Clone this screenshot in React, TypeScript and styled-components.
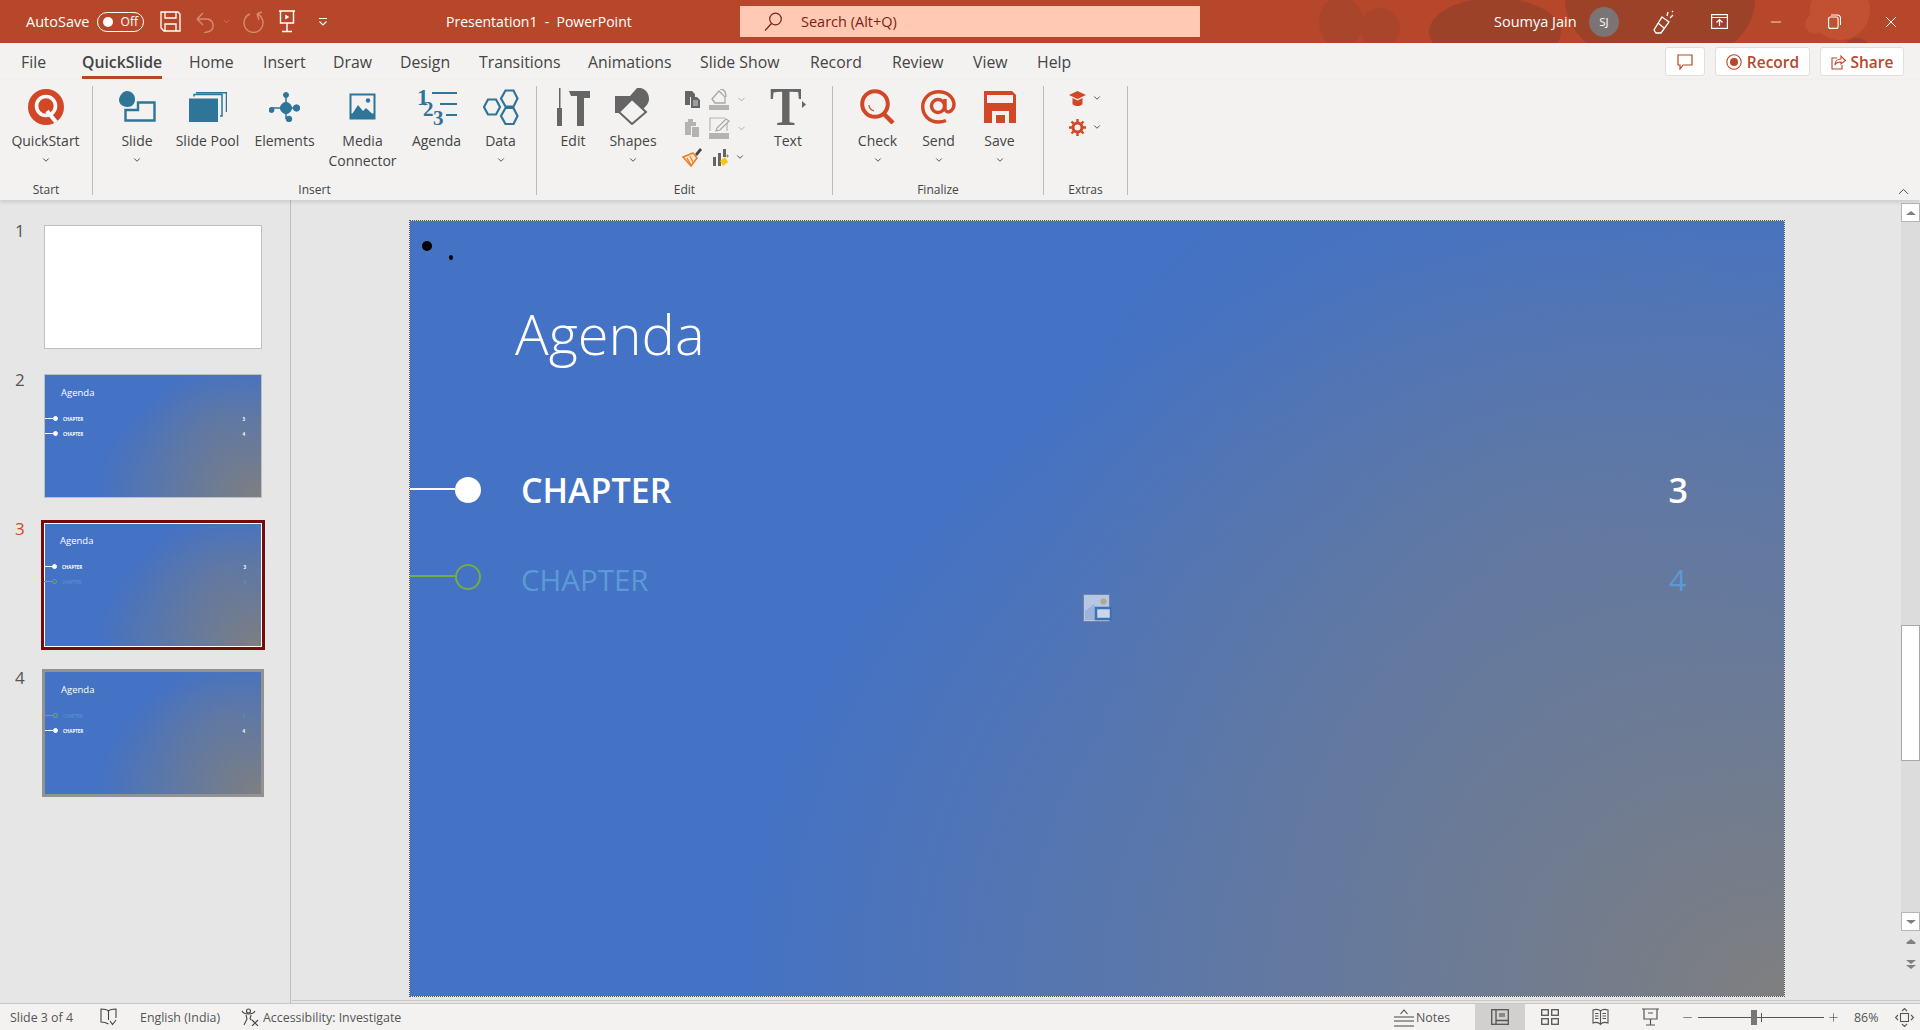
import React from 'react';
import styled, { createGlobalStyle } from 'styled-components';
import { ChevronDown, ChevronUp, X, Minus, Plus } from 'lucide-react';

const UI_FONT = `'Open Sans', 'Noto Sans', sans-serif`;
const TEAL = '#2e7598';
const RED = '#d24726';
const GREY = '#656565';
const FADED_BLUE = '#5b9bd5';

const GlobalStyle = createGlobalStyle`
  html, body {
    margin: 0;
    padding: 0;
    height: 100%;
    overflow: hidden;
    background: #e6e6e6;
  }
  #root {
    height: 100%;
  }
  * {
    box-sizing: border-box;
  }
`;

const tabs = [
  { label: 'File', width: 61 },
  { label: 'QuickSlide', width: 107, active: true },
  { label: 'Home', width: 74 },
  { label: 'Insert', width: 70 },
  { label: 'Draw', width: 67 },
  { label: 'Design', width: 79 },
  { label: 'Transitions', width: 109 },
  { label: 'Animations', width: 112 },
  { label: 'Slide Show', width: 110 },
  { label: 'Record', width: 82 },
  { label: 'Review', width: 81 },
  { label: 'View', width: 64 },
  { label: 'Help', width: 50 },
];

const Icon = {
  Save: () => (
    <svg width="21" height="21" viewBox="0 0 21 21" fill="none" stroke="#fff" strokeWidth="1.3">
      <path d="M1 1h17l2 2v17H4l-3-3z" />
      <path d="M5 1v6h11V1M5 20v-7h11v7" />
    </svg>
  ),
  Undo: () => (
    <svg width="19" height="22" viewBox="0 0 19 22" fill="none" stroke="#d98872" strokeWidth="1.4">
      <path d="M1 8h10a6.500 6.500 0 0 1 2 12.500L8 22M1 8l6-6M1 8l6 6" />
    </svg>
  ),
  Redo: () => (
    <svg width="21" height="22" viewBox="0 0 21 22" fill="none" stroke="#d98872" strokeWidth="1.4">
      <path d="M14 3a9.500 9.500 0 1 1-7 0M14 3l5-2M14 3l2 6" />
    </svg>
  ),
  Present: () => (
    <svg width="18" height="23" viewBox="0 0 18 23" fill="none" stroke="#fff" strokeWidth="1.4">
      <path d="M1 1h16M2.500 1v12h13V1M9 13v8M4 21.500h10" />
      <path d="M7.300 4.500v5l4-2.500z" fill="#fff" stroke="none" />
    </svg>
  ),
  Customize: () => (
    <svg width="10" height="10" viewBox="0 0 10 10" fill="none" stroke="#fff" strokeWidth="1.1">
      <path d="M1 1.500h8M1.500 4.500L5 8l3.500-3.500" />
    </svg>
  ),
  Search: () => (
    <svg width="18" height="20" viewBox="0 0 18 20" fill="none" stroke="#7d1f10" strokeWidth="1.2">
      <circle cx="11.500" cy="7" r="5.800" />
      <path d="M7.500 11.500L1 18.500" />
    </svg>
  ),
  Celebrate: () => (
    <svg width="22" height="24" viewBox="0 0 22 24" fill="none" stroke="#fff" strokeWidth="1.3">
      <path d="M9 7l7 5-8 11H3l-2-3z" />
      <path d="M5 13l6 5M14 6l1-4M17 8l3-3M19 1l1 1" />
    </svg>
  ),
  RibbonDisplay: () => (
    <svg width="17" height="15" viewBox="0 0 17 15" fill="none" stroke="#fff" strokeWidth="1.2">
      <rect x="0.600" y="0.600" width="15.800" height="13.800" />
      <path d="M1 3.500h15M8.500 12V6M5.500 8.500l3-3 3 3" />
    </svg>
  ),
  Restore: () => (
    <svg width="13" height="15" viewBox="0 0 13 15" fill="none" stroke="#fff" strokeWidth="1.1">
      <rect x="0.600" y="3" width="9.500" height="11.400" rx="2" />
      <path d="M3 1h6.500a3 3 0 0 1 3 3v7" />
    </svg>
  ),
  Comment: () => (
    <svg width="16" height="16" viewBox="0 0 16 16" fill="none" stroke="#b7472a" strokeWidth="1.2">
      <path d="M1 1h14v10H6l-3 4v-4H1z" />
    </svg>
  ),
  Record: () => (
    <svg width="16" height="16" viewBox="0 0 16 16" fill="none">
      <circle cx="8" cy="8" r="7.200" stroke="#b7472a" strokeWidth="1.1" />
      <circle cx="8" cy="8" r="4" fill="#b7472a" />
    </svg>
  ),
  Share: () => (
    <svg width="15" height="16" viewBox="0 0 15 16" fill="none" stroke="#b7472a" strokeWidth="1.1">
      <path d="M6 4H1v11h10v-4M4 11c0-4 3-6 6-6V2l4.500 4.500L10 10V8C7.500 8 5 9 4 11z" />
    </svg>
  ),
  QuickStart: () => (
    <svg width="36" height="36" viewBox="0 0 36 36">
      <circle cx="18" cy="18" r="18" fill={RED} />
      <circle cx="18" cy="17" r="9.500" fill="none" stroke="#fff" strokeWidth="3.600" />
      <path d="M19 22l9 11" stroke="#fff" strokeWidth="4" />
    </svg>
  ),
  Slide: () => (
    <svg width="37" height="31" viewBox="0 0 37 31">
      <path d="M8 0c4 0 8 3 8 8.500 0 4-3 7.500-7.500 7.500S0 13 0 9C0 5 4 0 8 0z" fill={TEAL} />
      <path d="M19 11.500h16.500v18h-29V19H19z" fill="none" stroke={TEAL} strokeWidth="2.400" />
    </svg>
  ),
  SlidePool: () => (
    <svg width="38" height="30" viewBox="0 0 38 30">
      <rect x="0" y="6.500" width="29" height="23.500" fill={TEAL} />
      <path d="M5 4.500V2.500h28V24h-2M7 0.800h30.500V20" fill="none" stroke={TEAL} strokeWidth="1.500" />
    </svg>
  ),
  Elements: () => (
    <svg width="31" height="30" viewBox="0 0 31 30" fill={TEAL} stroke={TEAL}>
      <path d="M17 3v24M2 16h27" strokeWidth="1.500" />
      <circle cx="17" cy="16" r="5.500" />
      <circle cx="17" cy="3" r="2.500" />
      <circle cx="2.500" cy="18" r="2.500" />
      <circle cx="27.500" cy="16" r="3.200" />
      <circle cx="20" cy="27" r="2.800" />
    </svg>
  ),
  Media: () => (
    <svg width="27" height="27" viewBox="0 0 27 27">
      <rect x="0.500" y="0.500" width="26" height="26" fill={TEAL} />
      <rect x="2.500" y="2.500" width="22" height="18" fill="#f3f2f1" />
      <circle cx="19" cy="7.500" r="2.200" fill={TEAL} />
      <path d="M2.500 22L9 12l5 6 3-3 7.500 7z" fill={TEAL} />
    </svg>
  ),
  Agenda: () => (
    <svg width="40" height="39" viewBox="0 0 40 39" fill={TEAL} overflow="visible">
      <text x="0" y="18" fontFamily="'Liberation Serif', serif" fontWeight="700" fontSize="23">1</text>
      <text x="6" y="29" fontFamily="'Liberation Serif', serif" fontWeight="700" fontSize="21">2</text>
      <text x="16" y="38" fontFamily="'Liberation Serif', serif" fontWeight="700" fontSize="21">3</text>
      <path d="M15 5h25v2H15zM23 16h17v2H23zM29 27h11v2H29z" />
    </svg>
  ),
  Data: () => (
    <svg width="36" height="36" viewBox="0 0 36 36" fill="none" stroke={TEAL} strokeWidth="2.200">
      <path d="M19 9.500l4.500-8h8l4 8-4 8h-8z" transform="translate(-1 0)" />
      <path d="M1 18l4-7.500h8l4 7.500-4 7.500H5z" />
      <path d="M18 27l4.500-8h8l4 8-4 8h-8z" />
    </svg>
  ),
  Edit: () => (
    <svg width="34" height="38" viewBox="0 0 34 38" fill={GREY}>
      <path d="M3 0h1.500v20H3zM1 20h5v18H1zM13 3h21v7h-6v28h-7V8h-6z" />
    </svg>
  ),
  Shapes: () => (
    <svg width="36" height="37" viewBox="0 0 36 37">
      <path d="M0 8h15L22 0c6-1 12 3 12 11 0 5-4 8-8 12L16 33 8 25H0z" fill={GREY} />
      <path d="M17 11l14 13-14 12L4 24z" fill="#f3f2f1" stroke={GREY} strokeWidth="2" />
    </svg>
  ),
  Copy: () => (
    <svg width="15" height="17" viewBox="0 0 15 17" fill={GREY}>
      <path d="M0 0h7l3 3v3H5v8H0z" />
      <path d="M6 6h6l3 3v8H6z" />
      <path d="M8 10h5M8 12h5M8 14h5" stroke="#f3f2f1" strokeWidth="0.800" />
    </svg>
  ),
  Paste: () => (
    <svg width="14" height="18" viewBox="0 0 14 18" fill="#b5b3b1">
      <path d="M0 3h3V0h5v3h3v4H6v9H0z" />
      <path d="M7 8h7v10H7z" />
    </svg>
  ),
  Fill: () => (
    <svg width="21" height="21" viewBox="0 0 21 21" fill="none">
      <path d="M3 10l7-8 6 6v6H6z" stroke="#a9a7a5" strokeWidth="1.300" />
      <path d="M0 16h20v5H0z" fill="#b5b3b1" />
      <path d="M11 0c4 0 6 3 6 8" stroke="#a9a7a5" strokeWidth="1.300" />
    </svg>
  ),
  Pen: () => (
    <svg width="21" height="22" viewBox="0 0 21 22" fill="none">
      <path d="M1 14V1h15M18 6v8" stroke="#b5b3b1" strokeWidth="1.200" />
      <path d="M7 14l1-3 9-9 3 2-9 9z" stroke="#a9a7a5" strokeWidth="1.200" />
      <path d="M0 16h20v6H0z" fill="#b5b3b1" />
    </svg>
  ),
  Brush: () => (
    <svg width="21" height="20" viewBox="0 0 21 20">
      <path d="M13 7l5-6 2 2-5 6z" fill="#444" />
      <path d="M1 10l10-4 4 5-6 8z" fill="#fbe3cc" stroke="#e8822a" strokeWidth="1.600" />
      <path d="M8 9l3 6M5 11l4 7" stroke="#e8822a" strokeWidth="1.300" />
    </svg>
  ),
  Chart: () => (
    <svg width="16" height="19" viewBox="0 0 16 19">
      <path d="M0 9h3v9H0zM5 5h3v13H5zM10 1h3v8h-3z" fill={GREY} />
      <path d="M7 13l5-4 3 5-5 4z" fill="#f2c811" />
      <path d="M13 8h3M14.500 6.500v3" stroke={GREY} strokeWidth="0.700" />
    </svg>
  ),
  Text: () => (
    <svg width="36" height="38" viewBox="0 0 36 38" fill={GREY} overflow="visible">
      <text transform="translate(0 37) scale(0.85 1)" fontFamily="'Liberation Serif', serif" fontWeight="700" fontSize="56">T</text>
      <path d="M32 13l4 3.500-4 3.500z" />
    </svg>
  ),
  Check: () => (
    <svg width="36" height="35" viewBox="0 0 36 35" fill="none" stroke={RED}>
      <circle cx="15" cy="15" r="12.800" strokeWidth="4" />
      <path d="M23 24l10 10" strokeWidth="4.500" />
      <path d="M9 16c0 3 2 5 5 6" strokeWidth="1.200" />
    </svg>
  ),
  Send: () => (
    <svg width="35" height="34" viewBox="0 0 35 34" fill="none" stroke={RED} strokeWidth="3.400">
      <circle cx="17" cy="16" r="6.500" />
      <path d="M24 9v9.500c0 3 3 4 5 3 3-2 4-4 4-6.500C33 7 26 1.700 17.500 1.700S1.700 8 1.700 16.500 8 32 17.500 32c3 0 5-.5 7.500-1.500" />
    </svg>
  ),
  SaveBig: () => (
    <svg width="32" height="32" viewBox="0 0 32 32" fill={RED}>
      <path fillRule="evenodd" d="M0 0h28l4 4v28h-7V20H8v12H0zM3 4v8h26V4z" />
      <path d="M12 24h9v8h-9z" />
    </svg>
  ),
  Mortar: () => (
    <svg width="17" height="15" viewBox="0 0 17 15" fill={RED}>
      <path d="M8.500 0L17 4 8.500 8 0 4z" />
      <path d="M3.500 7l5 2.500 5-2.500v6c-1 1.500-3 2-5 2s-4-.5-5-2z" />
    </svg>
  ),
  Gear: () => (
    <svg width="17" height="17" viewBox="0 0 17 17" fill="none" stroke={RED}>
      <circle cx="8.500" cy="8.500" r="4.500" strokeWidth="3" />
      <path d="M8.500 0v3M8.500 14v3M0 8.500h3M14 8.500h3M2.500 2.500l2 2M12.500 12.500l2 2M14.500 2.500l-2 2M4.500 12.500l-2 2" strokeWidth="2.400" />
    </svg>
  ),
  Book: () => (
    <svg width="17" height="18" viewBox="0 0 17 18" fill="none" stroke="#444" strokeWidth="1.100">
      <path d="M8.500 3C7 1.500 4 1 1 1v13c3 0 5 .5 7.500 2M8.500 3c1.500-1.500 4.500-2 7.500-2v9M8.500 3v9M10 13l2.500 3.500L16 12" />
    </svg>
  ),
  Access: () => (
    <svg width="18" height="18" viewBox="0 0 18 18" fill="none" stroke="#444" strokeWidth="1.100">
      <circle cx="7.500" cy="3" r="2" />
      <path d="M1 3c1 2 3 3 6.500 3S13 5 14 3M5 7l1 4-3 6M10 7l-1 4M9 11l1.500 1M11 12l6 6M17 12l-6 6" />
    </svg>
  ),
  Notes: () => (
    <svg width="20" height="20" viewBox="0 0 20 20" fill="none" stroke="#444" strokeWidth="1.100">
      <path d="M6.500 7L10 3l3.500 4M0 10h20M0 14h20M0 19h20" />
    </svg>
  ),
  Normal: () => (
    <svg width="18" height="16" viewBox="0 0 18 16" fill="none" stroke="#555" strokeWidth="1.300">
      <rect x="0.700" y="0.700" width="16.600" height="14.600" />
      <path d="M5 1v14M5 11.500h12" />
      <rect x="8" y="4" width="6" height="4" fill="#888" stroke="none" />
    </svg>
  ),
  Sorter: () => (
    <svg width="18" height="16" viewBox="0 0 18 16" fill="none" stroke="#555" strokeWidth="1.300">
      <rect x="0.700" y="0.700" width="6.600" height="5.600" />
      <rect x="10.700" y="0.700" width="6.600" height="5.600" />
      <rect x="0.700" y="9.700" width="6.600" height="5.600" />
      <rect x="10.700" y="9.700" width="6.600" height="5.600" />
    </svg>
  ),
  Reading: () => (
    <svg width="17" height="18" viewBox="0 0 17 18" fill="none" stroke="#555" strokeWidth="1.100">
      <path d="M8.500 3C7 1.500 4 1 1 2v13c3-1 6-.5 7.500 1.500C10 14.500 13 14 16 15V2c-3-1-6-.5-7.500 1zM8.500 3v13M3 5.500h3.500M3 8h3.500M3 10.500h3.500M10.500 5.500H14M10.500 8H14M10.500 10.500H14" />
    </svg>
  ),
  Show: () => (
    <svg width="17" height="18" viewBox="0 0 17 18" fill="none" stroke="#555" strokeWidth="1.200">
      <path d="M0 1h17M2 1v10h13V1M8.500 11v6M4 17h9M6 5h5" />
    </svg>
  ),
  Fit: () => (
    <svg width="19" height="19" viewBox="0 0 19 19" fill="none" stroke="#555" strokeWidth="1.100">
      <rect x="5.500" y="5.500" width="8" height="8" />
      <path d="M7 3l2.500-2.500L12 3M7 16l2.500 2.500L12 16M3 7L.5 9.500 3 12M16 7l2.500 2.500L16 12" />
    </svg>
  ),
  Placeholder: () => (
    <svg width="29" height="28" viewBox="0 0 29 28">
      <rect x="0.500" y="0.500" width="26" height="27" fill="#b6c6e4" stroke="#6f85a8" />
      <circle cx="20.500" cy="7.500" r="3" fill="#b0a88f" />
      <path d="M2 26v-9l9-7 3 6v10z" fill="#9db3da" />
      <rect x="13" y="14" width="15" height="11" fill="#c8d6ee" stroke="#3f72b5" strokeWidth="2.500" />
    </svg>
  ),
};

const TitleBlobs = () => (
  <BlobArt viewBox="0 0 640 43" width="640" height="43">
    <ellipse cx="61" cy="22" rx="22" ry="26" fill="#a8452a" />
    <circle cx="100" cy="28" r="20" fill="#a8452a" />
    <ellipse cx="215" cy="32" rx="66" ry="34" fill="#9c4229" />
    <ellipse cx="380" cy="0" rx="95" ry="68" fill="#9c4229" />
    <circle cx="560" cy="10" r="30" fill="#c25033" />
    <circle cx="535" cy="24" r="10" fill="#c25033" />
    <circle cx="577" cy="52" r="14" fill="#9c4229" />
  </BlobArt>
);

const MiniSlide: React.FC<{ rows: ('on' | 'off')[]; nums: string[] }> = ({ rows, nums }) => (
  <MiniInner>
    <MiniTitle>Agenda</MiniTitle>
    {rows.map((state, i) => (
      <MiniRow key={i}>
        <MiniLine $off={state === 'off'} />
        <MiniDot $off={state === 'off'} />
        <MiniLabel $off={state === 'off'}>CHAPTER</MiniLabel>
        <MiniNum $off={state === 'off'}>{nums[i]}</MiniNum>
      </MiniRow>
    ))}
  </MiniInner>
);

const RibbonBtn: React.FC<{
  width: number;
  label: React.ReactNode;
  chevron?: boolean;
  icon: React.ReactNode;
}> = ({ width, label, chevron, icon }) => (
  <BigButton $w={width}>
    <BigIcon>{icon}</BigIcon>
    <BigLabel>{label}</BigLabel>
    {chevron && (
      <Chev>
        <ChevronDown size={10} strokeWidth={2.2} />
      </Chev>
    )}
  </BigButton>
);

const App: React.FC = () => {
  return (
    <Shell>
      <GlobalStyle />
      <TitleBar>
        <TitleBlobs />
        <QatLabel>AutoSave</QatLabel>
        <Toggle>
          <ToggleDot />
          <span>Off</span>
        </Toggle>
        <QatIcons>
          <QatSlot $ml={0}><Icon.Save /></QatSlot>
          <QatSlot $ml={15}><Icon.Undo /></QatSlot>
          <FadedChev>
            <ChevronDown size={9} strokeWidth={1.6} />
          </FadedChev>
          <QatSlot $ml={12}><Icon.Redo /></QatSlot>
          <QatSlot $ml={14}><Icon.Present /></QatSlot>
          <QatSlot $ml={22}><Icon.Customize /></QatSlot>
        </QatIcons>
        <DocTitle>Presentation1&nbsp; -&nbsp; PowerPoint</DocTitle>
        <SearchBox>
          <Icon.Search />
          <SearchText>Search (Alt+Q)</SearchText>
        </SearchBox>
        <UserName>Soumya Jain</UserName>
        <Avatar>SJ</Avatar>
        <WinControls>
          <QatSlot $ml={0}><Icon.Celebrate /></QatSlot>
          <QatSlot $ml={36}><Icon.RibbonDisplay /></QatSlot>
          <QatSlot $ml={40}><Minus size={16} color="#fff" strokeWidth={1.2} /></QatSlot>
          <QatSlot $ml={44}><Icon.Restore /></QatSlot>
          <QatSlot $ml={41}><X size={18} color="#fff" strokeWidth={1.3} /></QatSlot>
        </WinControls>
      </TitleBar>

      <TabRow>
        {tabs.map((t) => (
          <Tab key={t.label} $w={t.width} $active={t.active}>
            <span>{t.label}</span>
          </Tab>
        ))}
        <TabActions>
          <ActionBtn $w={40}>
            <Icon.Comment />
          </ActionBtn>
          <ActionBtn $w={95}>
            <Icon.Record />
            Record
          </ActionBtn>
          <ActionBtn $w={84}>
            <Icon.Share />
            Share
          </ActionBtn>
        </TabActions>
      </TabRow>

      <Ribbon>
        <Group $w={93}>
          <GroupBody $pad={9}>
            <RibbonBtn width={73} label="QuickStart" chevron icon={<Icon.QuickStart />} />
          </GroupBody>
          <GroupLabel>Start</GroupLabel>
        </Group>
        <Group $w={444}>
          <GroupBody $pad={14}>
            <RibbonBtn width={60} label="Slide" chevron icon={<Icon.Slide />} />
            <RibbonBtn width={81} label="Slide Pool" icon={<Icon.SlidePool />} />
            <RibbonBtn width={73} label="Elements" icon={<Icon.Elements />} />
            <RibbonBtn width={83} label={<>Media<br />Connector</>} icon={<Icon.Media />} />
            <RibbonBtn width={65} label="Agenda" icon={<Icon.Agenda />} />
            <RibbonBtn width={63} label="Data" chevron icon={<Icon.Data />} />
          </GroupBody>
          <GroupLabel>Insert</GroupLabel>
        </Group>
        <Group $w={296}>
          <GroupBody $pad={8}>
            <RibbonBtn width={56} label="Edit" icon={<Icon.Edit />} />
            <RibbonBtn width={64} label="Shapes" chevron icon={<Icon.Shapes />} />
            <SmallStack>
              <SmallRow>
                <SmallCell $w={24}><Icon.Copy /></SmallCell>
                <Icon.Fill />
                <FadedDark><ChevronDown size={11} /></FadedDark>
              </SmallRow>
              <SmallRow>
                <SmallCell $w={24}><Icon.Paste /></SmallCell>
                <Icon.Pen />
                <FadedDark><ChevronDown size={11} /></FadedDark>
              </SmallRow>
              <SmallRow>
                <SmallCell $w={31} $ml={-3}><Icon.Brush /></SmallCell>
                <Icon.Chart />
                <DarkChev><ChevronDown size={10} strokeWidth={2.2} /></DarkChev>
              </SmallRow>
            </SmallStack>
            <RibbonBtn width={60} label="Text" icon={<Icon.Text />} />
          </GroupBody>
          <GroupLabel>Edit</GroupLabel>
        </Group>
        <Group $w={211}>
          <GroupBody $pad={14}>
            <RibbonBtn width={61} label="Check" chevron icon={<Icon.Check />} />
            <RibbonBtn width={61} label="Send" chevron icon={<Icon.Send />} />
            <RibbonBtn width={61} label="Save" chevron icon={<Icon.SaveBig />} />
          </GroupBody>
          <GroupLabel>Finalize</GroupLabel>
        </Group>
        <Group $w={84}>
          <ExtrasBody>
            <ExtraRow>
              <Icon.Mortar />
              <DarkChev><ChevronDown size={10} strokeWidth={2.2} /></DarkChev>
            </ExtraRow>
            <ExtraRow>
              <Icon.Gear />
              <DarkChev><ChevronDown size={10} strokeWidth={2.2} /></DarkChev>
            </ExtraRow>
          </ExtrasBody>
          <GroupLabel>Extras</GroupLabel>
        </Group>
        <Collapse>
          <ChevronUp size={17} strokeWidth={1.2} />
        </Collapse>
      </Ribbon>

      <Workspace>
        <Sidebar>
          <ThumbRow>
            <ThumbNum>1</ThumbNum>
            <Thumb />
          </ThumbRow>
          <ThumbRow>
            <ThumbNum>2</ThumbNum>
            <Thumb>
              <MiniSlide rows={['on', 'on']} nums={['3', '4']} />
            </Thumb>
          </ThumbRow>
          <ThumbRow>
            <ThumbNum $active>3</ThumbNum>
            <SelectedThumb>
              <MiniSlide rows={['on', 'off']} nums={['3', '4']} />
            </SelectedThumb>
          </ThumbRow>
          <ThumbRow>
            <ThumbNum>4</ThumbNum>
            <HoverThumb>
              <MiniSlide rows={['off', 'on']} nums={['3', '4']} />
            </HoverThumb>
          </ThumbRow>
        </Sidebar>
        <Editor>
          <Stage>
            <Slide>
              <DotBig />
              <DotSmall />
              <SlideTitle>Agenda</SlideTitle>
              <ChapterRow>
                <ChapterLine />
                <ChapterDot />
                <ChapterText>CHAPTER</ChapterText>
                <ChapterNum>3</ChapterNum>
              </ChapterRow>
              <ChapterRow $off>
                <ChapterLine $off />
                <ChapterDot $off />
                <ChapterText $off>CHAPTER</ChapterText>
                <ChapterNum $off>4</ChapterNum>
              </ChapterRow>
              <PlaceholderMark>
                <Icon.Placeholder />
              </PlaceholderMark>
            </Slide>
            <ScrollBar>
              <ScrollTrack>
                <ScrollButton>
                  <Arrow />
                </ScrollButton>
                <ScrollThumb />
                <ScrollButton $end>
                  <Arrow $down />
                </ScrollButton>
              </ScrollTrack>
              <PageArrows>
                <DoubleArrow />
                <DoubleArrow $down />
              </PageArrows>
            </ScrollBar>
          </Stage>
        </Editor>
      </Workspace>

      <StatusBar>
        <StatusText $w={90}>Slide 3 of 4</StatusText>
        <StatusItem $w={40}>
          <Icon.Book />
        </StatusItem>
        <StatusText $w={101}>English (India)</StatusText>
        <StatusItem $w={22}>
          <Icon.Access />
        </StatusItem>
        <StatusText>Accessibility: Investigate</StatusText>
        <StatusRight>
          <Icon.Notes />
          <NotesText>Notes</NotesText>
          <ViewButton $active>
            <Icon.Normal />
          </ViewButton>
          <ViewButton>
            <Icon.Sorter />
          </ViewButton>
          <ViewButton>
            <Icon.Reading />
          </ViewButton>
          <ViewButton>
            <Icon.Show />
          </ViewButton>
          <ZoomGroup>
            <Minus size={13} color="#555" strokeWidth={1.3} />
            <ZoomSlider>
              <ZoomTick />
              <ZoomKnob />
            </ZoomSlider>
            <Plus size={13} color="#555" strokeWidth={1.3} />
          </ZoomGroup>
          <ZoomValue>86%</ZoomValue>
          <Icon.Fit />
        </StatusRight>
      </StatusBar>
    </Shell>
  );
};

export default App;

const Shell = styled.div`
  display: flex;
  flex-direction: column;
  width: 1920px;
  height: 1030px;
  overflow: hidden;
  font-family: ${UI_FONT};
  color: #444;
`;

const TitleBar = styled.div`
  position: relative;
  display: flex;
  align-items: center;
  height: 43px;
  flex: none;
  background: #b7472a;
  color: #fff;
  font-size: 14.500px;
  padding-left: 26px;
`;

const BlobArt = styled.svg`
  position: absolute;
  right: 0;
  top: 0;
`;

const QatLabel = styled.div`
  width: 71px;
  position: relative;
`;

const Toggle = styled.div`
  display: flex;
  align-items: center;
  justify-content: space-between;
  width: 47px;
  height: 20px;
  padding: 0 5px 0 5px;
  border: 1px solid #fff;
  border-radius: 10px;
  font-size: 12px;
`;

const ToggleDot = styled.div`
  width: 10px;
  height: 10px;
  border-radius: 50%;
  background: #fff;
`;

const QatIcons = styled.div`
  display: flex;
  align-items: center;
  width: 286px;
  margin-left: 16px;
`;

const QatSlot = styled.div<{ $ml: number }>`
  display: flex;
  margin-left: ${(p) => p.$ml}px;
`;

const FadedChev = styled.div`
  display: flex;
  color: #d98872;
  margin-left: 7px;
`;

const DocTitle = styled.div`
  width: 294px;
  font-size: 14px;
  white-space: nowrap;
`;

const SearchBox = styled.div`
  display: flex;
  align-items: center;
  gap: 19px;
  width: 460px;
  height: 31px;
  padding-left: 24px;
  background: #ffc9b4;
`;

const SearchText = styled.div`
  color: #7d1f10;
`;

const UserName = styled.div`
  position: relative;
  margin-left: 294px;
  width: 95px;
  white-space: nowrap;
`;

const Avatar = styled.div`
  position: relative;
  display: flex;
  align-items: center;
  justify-content: center;
  width: 30px;
  height: 30px;
  border-radius: 50%;
  background: #7a7574;
  font-size: 11.500px;
`;

const WinControls = styled.div`
  position: relative;
  display: flex;
  align-items: center;
  margin-left: 34px;
`;

const TabRow = styled.div`
  display: flex;
  align-items: flex-start;
  height: 37px;
  flex: none;
  padding-left: 21px;
  background: #f3f2f1;
  font-size: 15.800px;
  color: #444;
`;

const Tab = styled.div<{ $w: number; $active?: boolean }>`
  flex: none;
  width: ${(p) => p.$w}px;
  height: 36px;
  white-space: nowrap;
  font-weight: ${(p) => (p.$active ? 600 : 400)};
  span {
    display: block;
    width: fit-content;
    height: 36px;
    padding-top: 3px;
    line-height: 33px;
    box-shadow: ${(p) => (p.$active ? 'inset 0 -3px 0 #b7472a' : 'none')};
  }
`;

const TabActions = styled.div`
  display: flex;
  gap: 10px;
  margin-left: auto;
  padding: 4px 16px 0 0;
`;

const ActionBtn = styled.div<{ $w: number }>`
  display: flex;
  align-items: center;
  justify-content: center;
  gap: 5px;
  width: ${(p) => p.$w}px;
  height: 29px;
  background: #fff;
  border: 1px solid #e1dfdd;
  border-radius: 3px;
  color: #b7472a;
  font-weight: 600;
  font-size: 15.500px;
`;

const Ribbon = styled.div`
  position: relative;
  display: flex;
  height: 120px;
  flex: none;
  background: #f3f2f1;
  padding-top: 6px;
  box-shadow: 0 2px 4px rgba(0, 0, 0, 0.12);
  z-index: 1;
`;

const Group = styled.div<{ $w: number }>`
  display: flex;
  flex-direction: column;
  flex: none;
  width: ${(p) => p.$w}px;
  height: 109px;
  border-right: 1px solid #bdbbb9;
`;

const GroupBody = styled.div<{ $pad: number }>`
  display: flex;
  flex: 1;
  min-height: 0;
  padding-left: ${(p) => p.$pad}px;
`;

const GroupLabel = styled.div`
  height: 16px;
  margin-bottom: -3px;
  text-align: center;
  font-size: 12px;
  line-height: 16px;
  color: #444;
`;

const BigButton = styled.div<{ $w: number }>`
  display: flex;
  flex-direction: column;
  align-items: center;
  flex: none;
  width: ${(p) => p.$w}px;
`;

const BigIcon = styled.div`
  display: flex;
  align-items: center;
  justify-content: center;
  height: 41px;
`;

const BigLabel = styled.div`
  margin-top: 4px;
  font-size: 14px;
  line-height: 20px;
  text-align: center;
  white-space: nowrap;
  color: #444;
`;

const Chev = styled.div`
  display: flex;
  justify-content: center;
  margin-top: 4px;
  color: #444;
`;

const SmallStack = styled.div`
  display: flex;
  flex-direction: column;
  flex: none;
  width: 93px;
  padding: 2px 0 0 20px;
  gap: 7px;
`;

const SmallRow = styled.div`
  display: flex;
  align-items: center;
  height: 22px;
`;

const SmallCell = styled.div<{ $w: number; $ml?: number }>`
  display: flex;
  align-items: center;
  width: ${(p) => p.$w}px;
  margin-left: ${(p) => p.$ml ?? 0}px;
`;

const FadedDark = styled.div`
  display: flex;
  color: #a9a7a5;
  margin-left: 6px;
`;

const DarkChev = styled.div`
  display: flex;
  color: #444;
  margin-left: 6px;
`;

const ExtrasBody = styled.div`
  display: flex;
  flex-direction: column;
  flex: 1;
  gap: 11px;
  padding: 3px 0 0 25px;
`;

const ExtraRow = styled.div`
  display: flex;
  align-items: center;
  height: 18px;
`;

const Collapse = styled.div`
  position: absolute;
  right: 8px;
  bottom: 0;
  display: flex;
  color: #333;
`;

const Workspace = styled.div`
  display: flex;
  flex: 1;
  min-height: 0;
  background: #e6e6e6;
`;

const Sidebar = styled.div`
  display: flex;
  flex-direction: column;
  flex: none;
  width: 291px;
  padding-top: 25px;
  border-right: 1px solid #bdbdbd;
`;

const ThumbRow = styled.div`
  position: relative;
  display: flex;
  width: 265px;
  height: 149px;
  padding-left: 44px;
`;

const ThumbNum = styled.div<{ $active?: boolean }>`
  position: absolute;
  left: 15px;
  top: -6px;
  font-size: 17px;
  line-height: 24px;
  color: ${(p) => (p.$active ? '#d24726' : '#555')};
`;

const Thumb = styled.div`
  width: 218px;
  height: 124px;
  background: #fff;
  border: 1px solid #bfbfbf;
`;

const SelectedThumb = styled.div`
  width: 224px;
  height: 130px;
  margin: -3px 0 0 -3px;
  border: 3px solid #750b0b;
  outline: 1px solid #fff;
  outline-offset: -4px;
`;

const HoverThumb = styled.div`
  width: 222px;
  height: 128px;
  margin: -3px 0 0 -2px;
  border: 3px solid #929292;
`;

const SLIDE_BG = `radial-gradient(ellipse 36% 55% at 82% 40%, rgba(127, 127, 127, 0.2) 0%, rgba(127, 127, 127, 0) 100%),
  radial-gradient(ellipse 76% 106% at 100% 100%, #7f7f7f 0%, #4472c4 100%)`;

const MiniInner = styled.div`
  display: flex;
  flex-direction: column;
  width: 100%;
  height: 100%;
  padding-top: 11px;
  background: ${SLIDE_BG};
`;

const MiniTitle = styled.div`
  margin: 0 0 12px 16px;
  font-size: 9.500px;
  line-height: 13px;
  color: #fff;
`;

const MiniRow = styled.div`
  position: relative;
  display: flex;
  align-items: center;
  height: 15px;
`;

const MiniLine = styled.div<{ $off?: boolean }>`
  width: 8px;
  height: 1px;
  background: ${(p) => (p.$off ? '#70ad47' : '#fff')};
`;

const MiniDot = styled.div<{ $off?: boolean }>`
  width: 5px;
  height: 5px;
  border-radius: 50%;
  background: ${(p) => (p.$off ? 'transparent' : '#fff')};
  border: 1px solid ${(p) => (p.$off ? '#70ad47' : '#fff')};
`;

const MiniLabel = styled.div<{ $off?: boolean }>`
  margin-left: 5px;
  font-size: 4.500px;
  font-weight: ${(p) => (p.$off ? 400 : 700)};
  color: ${(p) => (p.$off ? FADED_BLUE : '#fff')};
`;

const MiniNum = styled.div<{ $off?: boolean }>`
  margin-left: auto;
  margin-right: 16px;
  font-size: 4.500px;
  font-weight: ${(p) => (p.$off ? 400 : 700)};
  color: ${(p) => (p.$off ? FADED_BLUE : '#fff')};
`;

const Editor = styled.div`
  display: flex;
  flex-direction: column;
  flex: 1;
  min-width: 0;
  border-bottom: 1px solid #c8c8c8;
  margin-bottom: 2px;
  margin-left: 1px;
`;

const Stage = styled.div`
  position: relative;
  display: flex;
  flex: 1;
  min-height: 0;
  padding: 21px 1px 0 118px;
`;

const Slide = styled.div`
  position: relative;
  flex: none;
  display: flex;
  flex-direction: column;
  width: 1374px;
  height: 775px;
  outline: 1px dotted #555;
  background: ${SLIDE_BG};
  color: #fff;
`;

const DotBig = styled.div`
  position: absolute;
  left: 12px;
  top: 20px;
  width: 10px;
  height: 10px;
  border-radius: 50%;
  background: #000;
`;

const DotSmall = styled.div`
  position: absolute;
  left: 39px;
  top: 34px;
  width: 4px;
  height: 5px;
  border-radius: 50%;
  background: #000;
`;

const SlideTitle = styled.div`
  margin: 69px 0 0 105px;
  height: 86px;
  font-size: 56px;
  line-height: 86px;
  font-weight: 300;
`;

const ChapterRow = styled.div<{ $off?: boolean }>`
  position: relative;
  display: flex;
  align-items: center;
  height: 40px;
  margin-top: ${(p) => (p.$off ? '49px' : '94px')};
`;

const ChapterLine = styled.div<{ $off?: boolean }>`
  width: 45px;
  height: 2px;
  margin-top: ${(p) => (p.$off ? '-6px' : '-2px')};
  background: ${(p) => (p.$off ? '#70ad47' : '#fff')};
`;

const ChapterDot = styled.div<{ $off?: boolean }>`
  width: 26px;
  height: 26px;
  border-radius: 50%;
  margin-top: ${(p) => (p.$off ? '-4px' : '0')};
  background: ${(p) => (p.$off ? 'transparent' : '#fff')};
  border: ${(p) => (p.$off ? '2px solid #70ad47' : 'none')};
`;

const ChapterText = styled.div<{ $off?: boolean }>`
  margin-left: 40px;
  font-size: ${(p) => (p.$off ? '29.500px' : '34px')};
  font-weight: ${(p) => (p.$off ? 400 : 600)};
  color: ${(p) => (p.$off ? FADED_BLUE : '#fff')};
`;

const ChapterNum = styled.div<{ $off?: boolean }>`
  margin-left: auto;
  margin-right: ${(p) => (p.$off ? '98px' : '96px')};
  font-size: ${(p) => (p.$off ? '29.500px' : '34px')};
  font-weight: ${(p) => (p.$off ? 400 : 600)};
  color: ${(p) => (p.$off ? FADED_BLUE : '#fff')};
`;

const PlaceholderMark = styled.div`
  position: absolute;
  left: 673px;
  top: 373px;
  display: flex;
`;

const ScrollBar = styled.div`
  position: absolute;
  top: 3px;
  right: 0;
  display: flex;
  flex-direction: column;
  align-items: center;
  width: 19px;
  height: 797px;
`;

const ScrollTrack = styled.div`
  display: flex;
  flex-direction: column;
  width: 19px;
  height: 728px;
  background: #dcdcdc;
`;

const ScrollButton = styled.div<{ $end?: boolean }>`
  display: flex;
  align-items: center;
  justify-content: center;
  height: 19px;
  flex: none;
  margin-top: ${(p) => (p.$end ? 'auto' : '0')};
  background: #fff;
  border: 1px solid #b5b5b5;
`;

const ScrollThumb = styled.div`
  height: 136px;
  margin-top: 403px;
  background: #fff;
  border: 1px solid #a8a8a8;
`;

const Arrow = styled.div<{ $down?: boolean }>`
  width: 0;
  height: 0;
  border-left: 5px solid transparent;
  border-right: 5px solid transparent;
  border-${(p) => (p.$down ? 'top' : 'bottom')}: 4px solid #808080;
`;

const PageArrows = styled.div`
  display: flex;
  flex-direction: column;
  gap: 9px;
  margin-top: 8px;
`;

const DoubleArrow = styled.div<{ $down?: boolean }>`
  position: relative;
  width: 0;
  height: 0;
  margin-bottom: 8px;
  border-left: 5px solid transparent;
  border-right: 5px solid transparent;
  border-${(p) => (p.$down ? 'top' : 'bottom')}: 4px solid #808080;
  &::after {
    content: '';
    position: absolute;
    left: -5px;
    top: 1px;
    border-left: 5px solid transparent;
    border-right: 5px solid transparent;
    border-${(p) => (p.$down ? 'top' : 'bottom')}: 4px solid #808080;
  }
`;

const StatusBar = styled.div`
  display: flex;
  align-items: center;
  height: 27px;
  flex: none;
  padding-left: 10px;
  background: #f3f2f1;
  border-top: 1px solid #c8c8c8;
  font-size: 12.400px;
  color: #555;
`;

const StatusText = styled.div<{ $w?: number }>`
  flex: none;
  width: ${(p) => (p.$w ? `${p.$w}px` : 'auto')};
  white-space: nowrap;
`;

const StatusItem = styled.div<{ $w: number }>`
  display: flex;
  flex: none;
  width: ${(p) => p.$w}px;
`;

const StatusRight = styled.div`
  display: flex;
  align-items: center;
  height: 100%;
  margin-left: auto;
  padding-right: 6px;
`;

const NotesText = styled.div`
  width: 59px;
  margin-left: 2px;
`;

const ViewButton = styled.div<{ $active?: boolean }>`
  display: flex;
  align-items: center;
  justify-content: center;
  width: 50px;
  height: 100%;
  background: ${(p) => (p.$active ? '#d2d0ce' : 'transparent')};
`;

const ZoomGroup = styled.div`
  display: flex;
  align-items: center;
  margin-left: 6px;
`;

const ZoomSlider = styled.div`
  position: relative;
  width: 126px;
  height: 1px;
  margin: 0 3px 0 4px;
  background: #555;
`;

const ZoomTick = styled.div`
  position: absolute;
  left: 63px;
  top: -4px;
  width: 1px;
  height: 9px;
  background: #555;
`;

const ZoomKnob = styled.div`
  position: absolute;
  left: 53px;
  top: -7px;
  width: 6px;
  height: 15px;
  background: #777;
`;

const ZoomValue = styled.div`
  width: 55px;
  padding-left: 14px;
`;
